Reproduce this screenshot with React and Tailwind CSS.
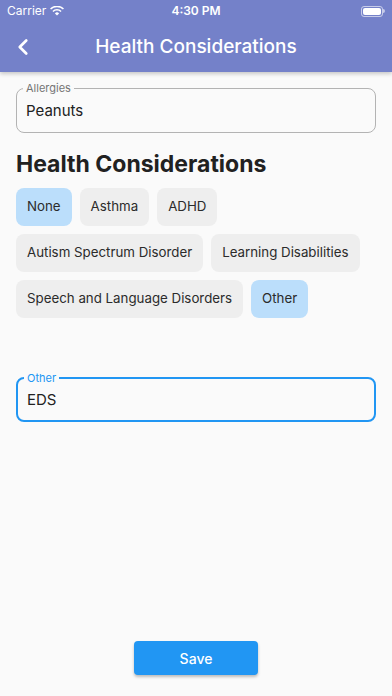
import React, { useState } from 'react';
import { ChevronLeft } from 'lucide-react';

const OPTIONS = [
  'None',
  'Asthma',
  'ADHD',
  'Autism Spectrum Disorder',
  'Learning Disabilities',
  'Speech and Language Disorders',
  'Other',
];

// Outlined text field with the label sitting on the top border
const OutlinedField = ({ label, value, focused = false }) => (
  <div
    className={`relative h-[45px] rounded-lg flex items-center px-[9px] ${
      focused ? 'border-2 border-[#2196f3]' : 'border border-[#b3b3b3]'
    }`}
  >
    <span
      className={`absolute -top-[8px] left-[6px] px-[3px] bg-[#fafafa] text-[11px] leading-[14px] ${
        focused ? 'text-[#2196f3]' : 'text-[#757575]'
      }`}
    >
      {label}
    </span>
    <span className="text-[15px] text-[#212121] pt-[2px]">{value}</span>
  </div>
);

const StatusBar = () => (
  <div className="h-[22px] flex items-center justify-between px-[7px] text-white text-[12px]">
    <div className="flex items-center gap-1 w-[80px]">
      <span>Carrier</span>
      <svg width="14" height="10" viewBox="0 0 14 10" fill="white">
        <path d="M7 9.6 4.9 7.4a3 3 0 0 1 4.2 0Z" />
        <path d="M3.5 6 2.4 4.9a6.5 6.5 0 0 1 9.2 0L10.5 6a5 5 0 0 0-7 0Z" />
        <path d="M1.1 3.6 0 2.5a9.9 9.9 0 0 1 14 0l-1.1 1.1a8.3 8.3 0 0 0-11.8 0Z" />
      </svg>
    </div>
    <span className="font-semibold">4:30 PM</span>
    <div className="w-[80px] flex justify-end">
      <div className="flex items-center">
        <div className="w-[22px] h-[11px] rounded-[3px] border border-white/60 p-[1px]">
          <div className="w-full h-full bg-white rounded-[2px]" />
        </div>
        <div className="w-[1.5px] h-[4px] bg-white/60 rounded-r" />
      </div>
    </div>
  </div>
);

export default function App() {
  const [selected] = useState(['None', 'Other']);

  return (
    <div
      className="min-h-screen bg-[#fafafa] flex flex-col"
      style={{ fontFamily: 'Inter, "Noto Sans", sans-serif' }}
    >
      {/* App bar */}
      <div className="bg-[#7481c9] shadow-[0_2px_4px_rgba(0,0,0,0.2)] relative z-10">
        <StatusBar />
        <div className="h-[50px] flex items-center relative">
          <button className="absolute left-[10px] text-white">
            <ChevronLeft size={26} strokeWidth={2.5} />
          </button>
          <h1 className="flex-1 text-center text-white text-[19px] font-medium">
            Health Considerations
          </h1>
        </div>
      </div>

      <div className="px-4 pt-4 flex-1 flex flex-col">
        <OutlinedField label="Allergies" value="Peanuts" />

        <h2 className="mt-[17px] text-[23px] leading-[28px] font-bold text-[#212121]">
          Health Considerations
        </h2>

        <div className="mt-[10px] flex flex-wrap gap-x-2 gap-y-[8.5px]">
          {OPTIONS.map((opt) => (
            <div
              key={opt}
              className={`h-[37.5px] px-[11px] rounded-lg flex items-center text-[13.3px] text-[#2b2b2b] ${
                selected.includes(opt) ? 'bg-[#bbdefb]' : 'bg-[#eeeeee]'
              }`}
            >
              {opt}
            </div>
          ))}
        </div>

        <div className="mt-[59px]">
          <OutlinedField label="Other" value="EDS" focused />
        </div>

        <div className="mt-auto mb-[21px] flex justify-center">
          <button className="w-[124px] h-[34px] rounded bg-[#2196f3] text-white text-[14px] font-medium shadow-[0_2px_3px_rgba(0,0,0,0.25)]">
            Save
          </button>
        </div>
      </div>
    </div>
  );
}
